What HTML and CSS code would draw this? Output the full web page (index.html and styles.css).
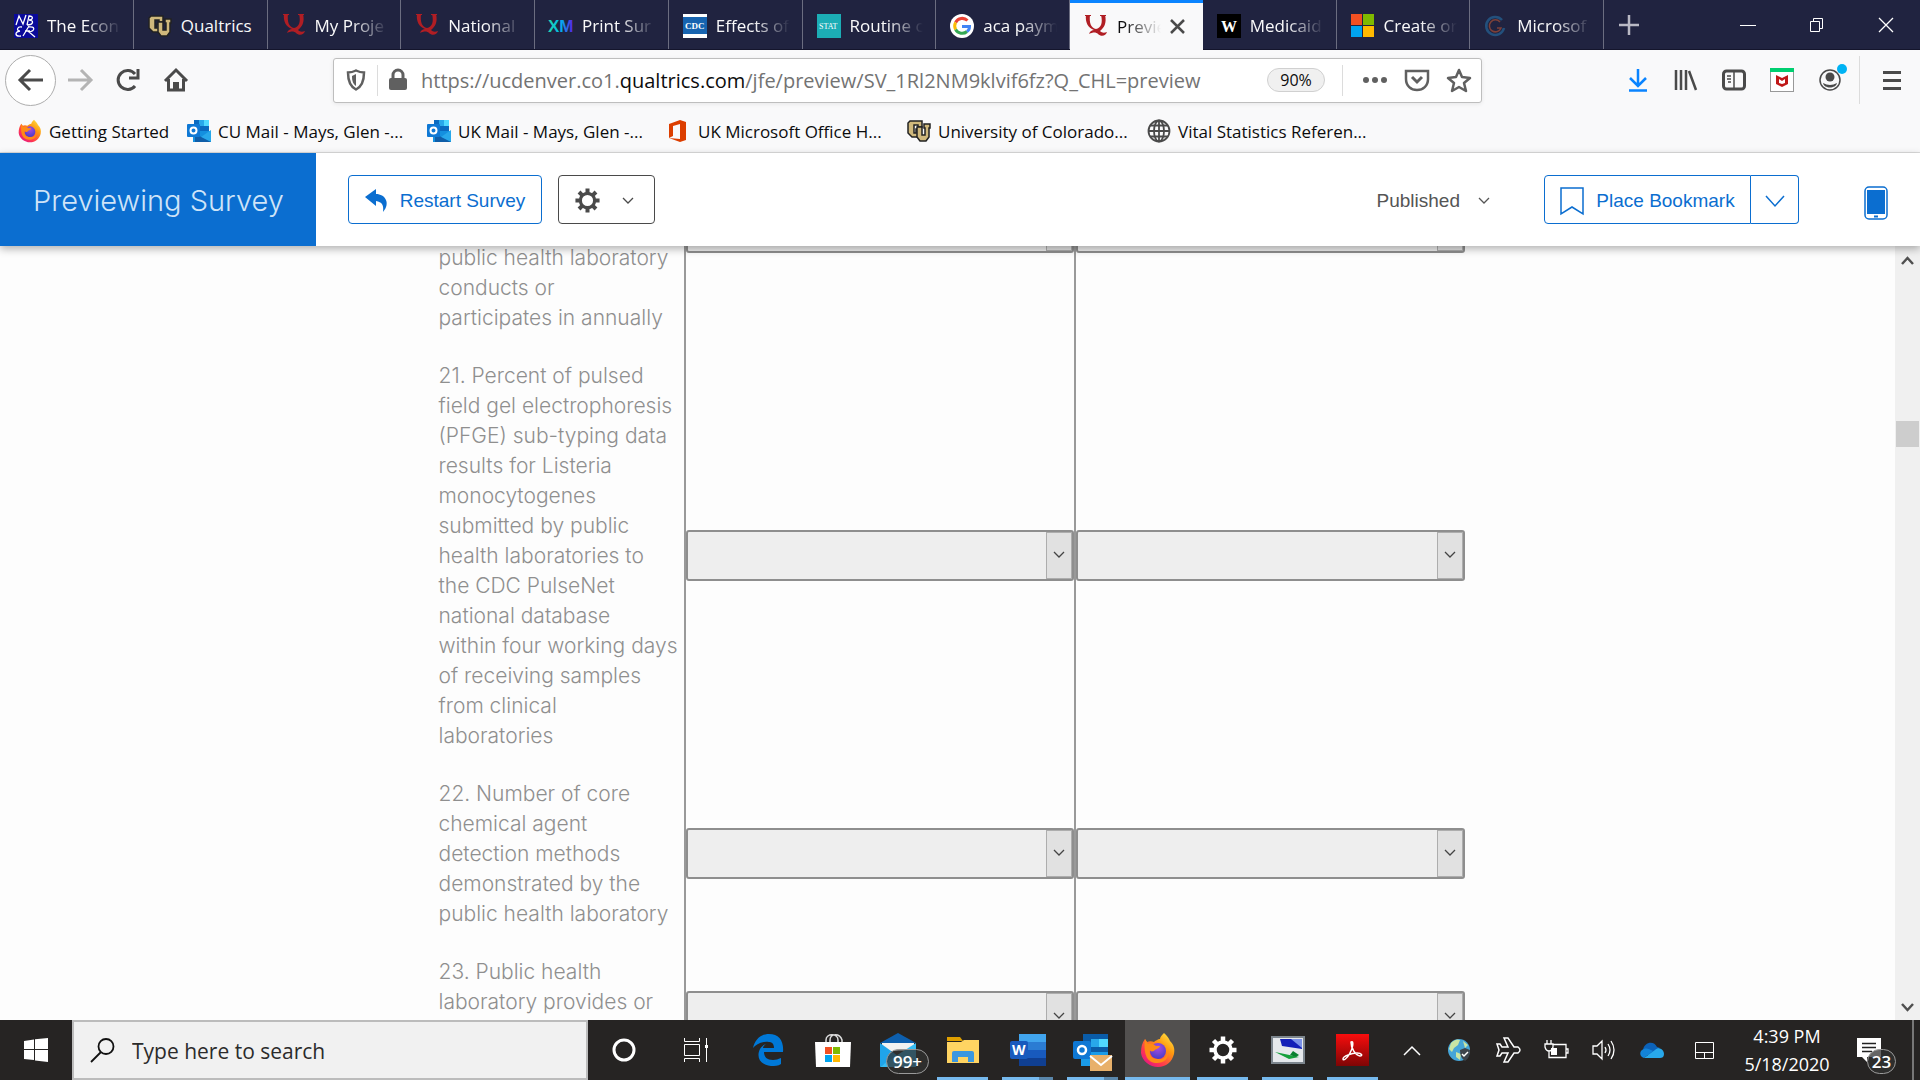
FILE: index.html
```html
<!DOCTYPE html>
<html lang="en">
<head>
    <meta charset="UTF-8">
    <meta name="viewport" content="width=device-width, initial-scale=1.0">
    <title>Preview - Online Survey Software</title>
    <link rel="stylesheet" href="styles.css">
</head>
<body>
    <!-- shared icons -->
    <svg class="defs" width="0" height="0" aria-hidden="true">
        <linearGradient id="fox" x1="1" y1="0" x2="0.2" y2="1">
            <stop offset="0" stop-color="#fff44f"/>
            <stop offset="0.4" stop-color="#ff980e"/>
            <stop offset="0.75" stop-color="#ff3750"/>
            <stop offset="1" stop-color="#e31587"/>
        </linearGradient>
        <linearGradient id="xm" x1="0" y1="0" x2="1" y2="0">
            <stop offset="0" stop-color="#21dbaa"/>
            <stop offset="0.5" stop-color="#00b4ef"/>
            <stop offset="1" stop-color="#5f1ae5"/>
        </linearGradient>
        <linearGradient id="acro" x1="0" y1="0" x2="0" y2="1">
            <stop offset="0" stop-color="#f80d0d"/>
            <stop offset="1" stop-color="#7e0505"/>
        </linearGradient>
        <radialGradient id="orb" cx="0.5" cy="0.3" r="0.7">
            <stop offset="0" stop-color="#a84de0"/>
            <stop offset="1" stop-color="#4a3cc8"/>
        </radialGradient>
        <symbol id="i-q" viewBox="0 0 24 24">
            <path d="M1 .5h6M16 .5h6" stroke="#b01e24"/>
            <path d="M2 0h4c-1 8 1 13 6 14 5-1 7-6 5-14h4c2 8-1 13-5 16 2 2 4 2 7 1-1 4-6 5-9 2-2-2-5-2-9 0 1-3 3-4 5-4C4 13 1 7 2 0z" fill="#b01e24"/>
        </symbol>
        <symbol id="i-cu" viewBox="0 0 24 24">
            <path d="M3 2h12v6h-4V6H7v8h2v-4h4v8H5l-4-4V4z" fill="#cfb87c" stroke="#222" stroke-width="1.5"/>
            <path d="M10 8h5v8h3V9h-1V5h6v4h-1v9l-3 4h-6l-3-4z" fill="#cfb87c" stroke="#222" stroke-width="1.5"/>
        </symbol>
        <symbol id="i-outlook" viewBox="0 0 24 24">
            <path d="M7 1h15v11H7z" fill="#0a6ac0"/>
            <path d="M12 1h5v6h-5z" fill="#28a8ea"/>
            <path d="M17 1h5v6h-5z" fill="#50d9ff"/>
            <path d="M6 12h18v11H6z" fill="#1490df"/>
            <path d="M24 11L14 18l10 5z" fill="#28a8ea"/>
            <path d="M8 12l6 6 10 5H8z" fill="#0f5ea8"/>
            <rect y="5" width="13" height="13" rx="1" fill="#0f78d4"/>
            <circle cx="6.500" cy="11.500" r="3" fill="none" stroke="#fff" stroke-width="2"/>
        </symbol>
        <symbol id="i-fox" viewBox="0 0 36 36">
            <path d="M24 1c3 3 5 5 6 8 4 4 5 8 4 13-2 8-8 13-16 13S2 29 1 21c0-6 1-10 4-14l2 3c2-1 5-1 7 0 1-1 4-3 6-3 0-2 2-4 4-6z" fill="url(#fox)"/>
            <circle cx="18" cy="19" r="8" fill="url(#orb)"/>
            <path d="M5 7l3 5c3-1 6 0 8 2h4c-1 3-5 3-6 5-3 1-4 0-4-1-1 5 2 9 8 9 6 1 9-3 10-8 1 8-4 12-11 12C8 31 3 24 5 7z" fill="#ff8a16"/>
        </symbol>
        <symbol id="i-chev" viewBox="0 0 12 12">
            <path d="M1 3l5 5 5-5" fill="none" stroke="currentColor" stroke-width="1.300"/>
        </symbol>
        <symbol id="i-gear" viewBox="0 0 28 28">
            <circle cx="14" cy="14" r="8" fill="none" stroke="currentColor" stroke-width="3.500"/>
            <path d="M14 .5v5M14 22.500v5M.5 14h5M22.500 14h5M4.500 4.500L8 8M20 20l3.500 3.500M4.500 23.500L8 20M20 8l3.500-3.500" stroke="currentColor" stroke-width="4.500"/>
        </symbol>
        <symbol id="i-ms" viewBox="0 0 24 24">
            <path d="M0 0h11v11H0z" fill="#f25022"/><path d="M12 0h11v11H12z" fill="#7fba00"/>
            <path d="M0 12h11v11H0z" fill="#00a4ef"/><path d="M12 12h11v11H12z" fill="#ffb900"/>
        </symbol>
    </svg>

    <div class="tabbar">
        <div class="tabs">
            <div class="tab"><svg class="fav" viewBox="0 0 24 24"><rect width="24" height="24" fill="#0a0a9a"/><path d="M2 11L5 2l4 8 3-9M13 11l2-9c5 0 4 4 0 4 5 0 5 5-2 5M8 13c-5-1-6 4-2 4-6 1-5 6 1 5M9 22l6-10M14 13c8-1 7 4 1 5l6 5M11 17h5" fill="none" stroke="#fff" stroke-width="1.300"/></svg><span class="tab-title">The Econ</span></div>
            <div class="tab"><svg class="fav"><use href="#i-cu"/></svg><span class="tab-title">Qualtrics</span></div>
            <div class="tab"><svg class="fav"><use href="#i-q"/></svg><span class="tab-title">My Proje</span></div>
            <div class="tab"><svg class="fav"><use href="#i-q"/></svg><span class="tab-title">National</span></div>
            <div class="tab"><svg class="fav" viewBox="0 0 24 24"><text x="-1" y="18" class="xm">XM</text></svg><span class="tab-title">Print Sur</span></div>
            <div class="tab"><svg class="fav" viewBox="0 0 24 24"><rect width="24" height="24" fill="#fff"/><rect y="3" width="24" height="17" fill="#1764b0"/><text x="2" y="15" class="cdc">CDC</text></svg><span class="tab-title">Effects of</span></div>
            <div class="tab"><svg class="fav" viewBox="0 0 24 24"><rect width="24" height="24" fill="#1cadb5"/><text x="2" y="15" class="stat">STAT</text></svg><span class="tab-title">Routine c</span></div>
            <div class="tab"><svg class="fav" viewBox="0 0 24 24"><circle cx="12" cy="12" r="12" fill="#fff"/><g fill="none" stroke-width="3"><path d="M5.600 8.500A7.500 7.500 0 0 1 17.500 6.500" stroke="#ea4335"/><path d="M5.600 15.500a7.500 7.500 0 0 1 0-7" stroke="#fbbc05"/><path d="M17 17.500A7.500 7.500 0 0 1 5.600 15.500" stroke="#34a853"/><path d="M12 12.500h7.500c0 2-1 4-2.500 5" stroke="#4285f4"/></g></svg><span class="tab-title">aca paym</span></div>
            <div class="tab active"><svg class="fav"><use href="#i-q"/></svg><span class="tab-title">Previe</span><button class="tab-close" aria-label="Close tab"><svg width="15" height="15" viewBox="0 0 15 15"><path d="M1 1l13 13M14 1L1 14" stroke="#4a4a4a" stroke-width="2.500"/></svg></button></div>
            <div class="tab"><svg class="fav" viewBox="0 0 24 24"><rect width="24" height="24" fill="#000"/><text x="4" y="18" class="wapo">W</text></svg><span class="tab-title">Medicaid</span></div>
            <div class="tab"><svg class="fav"><use href="#i-ms"/></svg><span class="tab-title">Create or</span></div>
            <div class="tab"><svg class="fav" viewBox="0 0 24 24"><path d="M18 6a9 9 0 1 0 2 8" fill="none" stroke="#23507c" stroke-width="2.500"/><path d="M16 8a6 6 0 1 0 1 6h-4" fill="none" stroke="#7c4038" stroke-width="1.500"/></svg><span class="tab-title">Microsof</span></div>
        </div>
        <button class="newtab" aria-label="New tab"><svg width="22" height="22" viewBox="0 0 22 22"><path d="M11 1v20M1 11h20" stroke="#b9b9c4" stroke-width="2.500"/></svg></button>
        <div class="winctl">
            <button aria-label="Minimize"><svg width="16" height="16"><path d="M0 8.500h16" stroke="#fff"/></svg></button>
            <button aria-label="Restore"><svg width="16" height="16"><path d="M1.500 4.500h9v10h-9zM4.500 4.500v-3h9v10h-3" fill="none" stroke="#fff"/></svg></button>
            <button aria-label="Close"><svg width="16" height="16"><path d="M1 1l14 14M15 1L1 15" stroke="#fff" stroke-width="1.300"/></svg></button>
        </div>
    </div>

    <div class="navbar">
        <button class="back" aria-label="Back"><svg width="26" height="24" viewBox="0 0 26 24"><path d="M25 12H3M12 2L2 12l10 10" fill="none" stroke="#4a4a4a" stroke-width="3"/></svg></button>
        <button class="nav-btn" aria-label="Forward"><svg width="26" height="24" viewBox="0 0 26 24"><path d="M1 12h22M14 2l10 10-10 10" fill="none" stroke="#b4b4b4" stroke-width="3"/></svg></button>
        <button class="nav-btn" aria-label="Reload"><svg width="24" height="24" viewBox="0 0 24 24"><path d="M19 18A9.500 9.500 0 1 1 19 6" fill="none" stroke="#4a4a4a" stroke-width="3"/><path d="M22 1v9h-9" fill="none" stroke="#4a4a4a" stroke-width="3"/></svg></button>
        <button class="nav-btn" aria-label="Home"><svg width="24" height="24" viewBox="0 0 24 24"><path d="M1 13L12 2l11 11M4.500 11v11h15V11" fill="none" stroke="#4a4a4a" stroke-width="3"/><path d="M9 14h6v8H9z" fill="#4a4a4a"/></svg></button>
        <div class="urlbar">
            <svg width="20" height="22" viewBox="0 0 20 22"><path d="M10 1.500c3 1.500 5 2 8 2 0 9-2 14-8 17-6-3-8-8-8-17 3 0 5-.5 8-2z" fill="none" stroke="#606060" stroke-width="2.500"/><path d="M10 5v12c-3-2-4-5-4-10z" fill="#606060"/></svg>
            <span class="url-sep"></span>
            <svg class="lock" width="18" height="22" viewBox="0 0 18 22"><rect y="9" width="18" height="12" rx="2" fill="#606060"/><path d="M4 10V6a5 5 0 0 1 10 0v4" fill="none" stroke="#606060" stroke-width="3"/></svg>
            <span class="url">https://ucdenver.co1.<b>qualtrics.com</b>/jfe/preview/SV_1Rl2NM9klvif6fz?Q_CHL=preview</span>
            <button class="zoom">90%</button>
            <span class="url-sep"></span>
            <button class="url-btn" aria-label="Page actions"><svg width="26" height="24"><g fill="#606060"><circle cx="4" cy="12" r="3"/><circle cx="13" cy="12" r="3"/><circle cx="22" cy="12" r="3"/></g></svg></button>
            <button class="url-btn" aria-label="Save to Pocket"><svg width="26" height="24" viewBox="0 0 26 24"><path d="M2 3h22v8c0 7-5 11-11 11S2 18 2 11z" fill="none" stroke="#606060" stroke-width="2.500"/><path d="M8 9l5 5 5-5" fill="none" stroke="#606060" stroke-width="3"/></svg></button>
            <button class="url-btn" aria-label="Bookmark page"><svg width="26" height="24" viewBox="0 0 26 24"><path d="M13 2l3 7 8 1-6 5 2 8-7-4-7 4 2-8-6-5 8-1z" fill="none" stroke="#606060" stroke-width="2.500" stroke-linejoin="round"/></svg></button>
        </div>
        <div class="toolbar">
            <button class="nav-btn" aria-label="Downloads"><svg width="20" height="24" viewBox="0 0 20 24"><path d="M10 1v16M2 10l8 8 8-8M1 22.500h18" fill="none" stroke="#0a84ff" stroke-width="2.500"/></svg></button>
            <button class="nav-btn" aria-label="Library"><svg width="24" height="24" viewBox="0 0 24 24"><path d="M2 2v20M7 2v20M12 2v20M15 3l7 19" stroke="#4a4a4a" stroke-width="2.500"/></svg></button>
            <button class="nav-btn" aria-label="Sidebars"><svg width="24" height="24" viewBox="0 0 24 24"><rect x="1.500" y="3" width="21" height="18" rx="3" fill="none" stroke="#4a4a4a" stroke-width="3"/><path d="M12 3v18M5 8h4M5 11h4M6 14h3" stroke="#4a4a4a" stroke-width="1.500"/></svg></button>
            <button class="nav-btn" aria-label="McAfee"><svg width="24" height="24" viewBox="0 0 24 24"><rect x=".5" y=".5" width="23" height="23" fill="#fff" stroke="#999"/><path d="M0 0h24v4H0z" fill="#00cf70"/><path d="M6 7l6 3 6-3v9l-6 3-6-3z" fill="#c01818"/><path d="M9 11l3 2 3-2v4l-3 1-3-1z" fill="#fff"/></svg></button>
            <button class="nav-btn account" aria-label="Account"><svg width="24" height="24" viewBox="0 0 24 24"><circle cx="12" cy="12" r="10" fill="none" stroke="#4a4a4a" stroke-width="1.500"/><circle cx="12" cy="9" r="4.500" fill="#4a4a4a"/><path d="M5 15q7 4 14 0c-1 6-13 6-14 0z" fill="#4a4a4a"/></svg><span class="dot"></span></button>
        </div>
        <button class="menu" aria-label="Menu"><svg width="20" height="20"><path d="M1 2.500h18M1 10.500h18M1 18.500h18" stroke="#4a4a4a" stroke-width="3"/></svg></button>
    </div>

    <div class="bookmarks">
        <a class="bm first" href="#"><svg class="fav"><use href="#i-fox"/></svg>Getting Started</a>
        <a class="bm" href="#"><svg class="fav"><use href="#i-outlook"/></svg>CU Mail - Mays, Glen -...</a>
        <a class="bm" href="#"><svg class="fav"><use href="#i-outlook"/></svg>UK Mail - Mays, Glen -...</a>
        <a class="bm" href="#"><svg class="fav" viewBox="0 0 24 24"><path d="M2 5l11-4 6 2v18l-6 2-11-4 11 1V5L6 7v10l-4 2z" fill="#dc3e00"/></svg>UK Microsoft Office H...</a>
        <a class="bm" href="#"><svg class="fav"><use href="#i-cu"/></svg>University of Colorado...</a>
        <a class="bm" href="#"><svg class="fav" viewBox="0 0 24 24"><g fill="none" stroke="#4a4a4a" stroke-width="1.800"><circle cx="12" cy="12" r="10.500"/><ellipse cx="12" cy="12" rx="5" ry="10.500"/><path d="M12 1v22M1 12h22M3 6.500h18M3 17.500h18"/></g></svg>Vital Statistics Referen...</a>
    </div>

    <header class="preview">
        <h1 class="preview-title">Previewing Survey</h1>
        <button class="btn blue restart"><svg width="24" height="24" viewBox="0 0 24 24"><path d="M0 8L11 0v5c9 0 15 9 7 18 1-7-1-10-7-11v5z" fill="#0b6ed0"/></svg>Restart Survey</button>
        <button class="btn tools" aria-label="Tools"><svg width="25" height="25"><use href="#i-gear"/></svg><svg width="12" height="12"><use href="#i-chev"/></svg></button>
        <button class="version">Published<svg width="12" height="12"><use href="#i-chev"/></svg></button>
        <div class="split">
            <button class="btn blue place"><svg width="24" height="28" viewBox="0 0 24 28"><path d="M1 1h22v26l-11-7-11 7z" fill="none" stroke="#0b6ed0" stroke-width="1.500"/></svg>Place Bookmark</button>
            <button class="btn blue more" aria-label="More"><svg width="20" height="12" viewBox="0 0 20 12"><path d="M1 1l9 10 9-10" fill="none" stroke="#0b6ed0" stroke-width="1.500"/></svg></button>
        </div>
        <button class="device" aria-label="Mobile view"><svg width="24" height="34" viewBox="0 0 24 34"><rect x="1" y="1" width="22" height="32" rx="4" fill="#fff" stroke="#0b6ed0" stroke-width="1.500"/><path d="M3 4h18v24H3z" fill="#0b6ed0"/><path d="M10 30.500h4" stroke="#0b6ed0" stroke-width="2"/></svg></button>
    </header>

    <main class="page">
        <div class="survey">
            <table class="matrix">
                <tbody>
                    <tr class="q20">
                        <th scope="row">public health laboratory<br>conducts or<br>participates in annually</th>
                        <td><div class="pick"><select aria-label="Question 20, first column"><option></option></select><span class="arrow"><svg width="12" height="12"><use href="#i-chev"/></svg></span></div></td>
                        <td><div class="pick"><select aria-label="Question 20, second column"><option></option></select><span class="arrow"><svg width="12" height="12"><use href="#i-chev"/></svg></span></div></td>
                    </tr>
                    <tr>
                        <th scope="row">21. Percent of pulsed<br>field gel electrophoresis<br>(PFGE) sub-typing data<br>results for Listeria<br>monocytogenes<br>submitted by public<br>health laboratories to<br>the CDC PulseNet<br>national database<br>within four working days<br>of receiving samples<br>from clinical<br>laboratories</th>
                        <td><div class="pick"><select aria-label="Question 21, first column"><option></option></select><span class="arrow"><svg width="12" height="12"><use href="#i-chev"/></svg></span></div></td>
                        <td><div class="pick"><select aria-label="Question 21, second column"><option></option></select><span class="arrow"><svg width="12" height="12"><use href="#i-chev"/></svg></span></div></td>
                    </tr>
                    <tr>
                        <th scope="row">22. Number of core<br>chemical agent<br>detection methods<br>demonstrated by the<br>public health laboratory</th>
                        <td><div class="pick"><select aria-label="Question 22, first column"><option></option></select><span class="arrow"><svg width="12" height="12"><use href="#i-chev"/></svg></span></div></td>
                        <td><div class="pick"><select aria-label="Question 22, second column"><option></option></select><span class="arrow"><svg width="12" height="12"><use href="#i-chev"/></svg></span></div></td>
                    </tr>
                    <tr class="q23">
                        <th scope="row">23. Public health<br>laboratory provides or</th>
                        <td><div class="pick"><select aria-label="Question 23, first column"><option></option></select><span class="arrow"><svg width="12" height="12"><use href="#i-chev"/></svg></span></div></td>
                        <td><div class="pick"><select aria-label="Question 23, second column"><option></option></select><span class="arrow"><svg width="12" height="12"><use href="#i-chev"/></svg></span></div></td>
                    </tr>
                </tbody>
            </table>
        </div>
        <div class="scrollbar">
            <svg width="13" height="9" viewBox="0 0 13 9"><path d="M1 8l5.500-6L12 8" fill="none" stroke="#505050" stroke-width="2.500"/></svg>
            <span class="thumb"></span>
            <svg width="13" height="9" viewBox="0 0 13 9"><path d="M1 1l5.500 6L12 1" fill="none" stroke="#505050" stroke-width="2.500"/></svg>
        </div>
    </main>

    <footer class="taskbar">
        <button class="start" aria-label="Start"><svg width="24" height="24" viewBox="0 0 24 24"><path d="M0 3l10-1.500V11H0zM11 1.300L24 0v11H11zM0 12h10v10L0 21zM11 12h13v12l-13-1.500z" fill="#fff"/></svg></button>
        <label class="search">
            <svg width="25" height="25" viewBox="0 0 25 25"><circle cx="16" cy="8.500" r="7.500" fill="none" stroke="#111" stroke-width="1.800"/><path d="M11 14L1 24" stroke="#111" stroke-width="1.800"/></svg>
            <input type="text" placeholder="Type here to search" aria-label="Search">
        </label>
        <button class="sys" aria-label="Cortana"><svg width="24" height="24"><circle cx="12" cy="12" r="10" fill="none" stroke="#fff" stroke-width="3"/></svg></button>
        <button class="sys" aria-label="Task View"><svg width="24" height="24" viewBox="0 0 24 24"><path d="M.5 6.500h15v11H.5zM.5 0v3.500h15V0M.5 24v-3.500h15V24M22.500 0v24" fill="none" stroke="#fff"/><path d="M21 7h3v3h-3z" fill="#fff"/></svg></button>
        <div class="apps">
            <button class="app" aria-label="Edge"><svg width="32" height="32" viewBox="0 0 32 32"><path d="M1 14C3 5 9 0 17 0c10 0 15 7 14 18H12c0 5 3 8 9 8 3 0 5-1 8-2v6c-3 2-6 2-10 2C8 31 4 23 8 15c1-2 3-4 6-5-2 1-3 3-3 4h11c0-4-2-6-5-6C10 7 4 10 1 14z" fill="#0078d7"/></svg></button>
            <button class="app" aria-label="Store"><svg width="36" height="34" viewBox="0 0 36 34"><path d="M11 10V7c0-7 12-7 12 0v3M15 10V7c0-7 10-7 12 0v3" fill="none" stroke="#ddd" stroke-width="1.500"/><path d="M0 9h36l-1 25H1z" fill="#fff"/><path d="M10 14h7v7h-7z" fill="#f25022"/><path d="M18 14h7v7h-7z" fill="#7fba00"/><path d="M10 22h7v7h-7z" fill="#00a4ef"/><path d="M18 22h7v7h-7z" fill="#ffb900"/></svg></button>
            <button class="app" aria-label="Mail"><svg width="36" height="34" viewBox="0 0 36 34"><path d="M0 10L18 0l18 10z" fill="#0d5fae"/><path d="M2 10h32v8H2z" fill="#f2f2f2"/><path d="M0 10l18 13L0 34z" fill="#1fa4ea"/><path d="M36 10L8 28l-8 6h36z" fill="#35bdf5"/></svg><span class="count mail-count">99+</span></button>
            <button class="app open" aria-label="File Explorer"><svg width="32" height="26" viewBox="0 0 32 26"><path d="M0 0h13l3 4H0z" fill="#e0a000"/><path d="M0 5h14l3-2h15v23H0z" fill="#ffd462"/><path d="M5 25V16q0-2 2-2h18q2 0 2 2v9h-6v-5H11v5z" fill="#3a97e0"/></svg></button>
            <button class="app open multi" aria-label="Word"><svg width="36" height="32" viewBox="0 0 36 32"><path d="M9 0h27v8H9z" fill="#41a5ee"/><path d="M9 8h27v8H9z" fill="#2b7cd3"/><path d="M9 16h27v8H9z" fill="#185abd"/><path d="M9 24h27v8H9z" fill="#103f91"/><rect y="7" width="18" height="18" rx="2" fill="#185abd"/><text x="2" y="21" class="w">W</text></svg></button>
            <button class="app open multi" aria-label="Outlook"><svg class="mailed" width="40" height="38" viewBox="0 0 40 38"><path d="M10 0h25v20H10z" fill="#0a5ca8"/><path d="M18 5h8v8h-8z" fill="#28a8ea"/><path d="M26 5h9v8h-9z" fill="#50d9ff"/><path d="M8 18h27v14H8z" fill="#1a9be8"/><rect y="7" width="18" height="18" rx="2" fill="#0f78d4"/><circle cx="9" cy="16" r="4" fill="none" stroke="#fff" stroke-width="2.500"/><path d="M17 21h22v16H17z" fill="#e8b06a"/><path d="M17 22l11 9 11-9" fill="none" stroke="#fff" stroke-width="2"/></svg></button>
            <button class="app open current" aria-label="Firefox"><svg width="36" height="36"><use href="#i-fox"/></svg></button>
            <button class="app open" aria-label="Settings"><svg class="white" width="28" height="28"><use href="#i-gear"/></svg></button>
            <button class="app open" aria-label="Snipping Tool"><svg width="34" height="28" viewBox="0 0 34 28"><path d="M1 1h32v26H1z" fill="#e6e9ec" stroke="#7d868e" stroke-width="2"/><path d="M9 3h22v10L11 10z" fill="#1420b8"/><path d="M20 3h11v9z" fill="#7b92e8"/><path d="M4 16l24 5-10 2z" fill="#15a03c"/><path d="M22 15l6 4-3 2-6-2z" fill="#0a8030"/></svg></button>
            <button class="app open" aria-label="Acrobat"><svg width="33" height="32" viewBox="0 0 33 32"><path d="M0 0h33v32H0z" fill="url(#acro)"/><path d="M15 8c3-2 2 6-1 11-3 6-7 8-7 6 0-3 9-6 14-6s6 3 3 3c-5-1-9-8-9-14z" fill="none" stroke="#fff" stroke-width="1.500"/></svg></button>
        </div>
        <div class="tray">
            <button class="tray-btn" aria-label="Show hidden icons"><svg width="18" height="11"><path d="M1 10l8-8 8 8" fill="none" stroke="#fff" stroke-width="1.500"/></svg></button>
            <button class="tray-btn" aria-label="Network"><svg width="24" height="24" viewBox="0 0 24 24"><circle cx="11" cy="12" r="11" fill="#45a5d8"/><path d="M3 5q5-5 9-3l-2 5-4 3-2 4-3-3zM8 14l5 2-1 6-4-3zM15 3l5 4-3 3z" fill="#c9e5a4"/><path d="M12 12l5-2 5 2q0 8-5 11-5-3-5-11z" fill="#3d434a"/><path d="M14 16l2 2 4-4" fill="none" stroke="#fff" stroke-width="1.500"/></svg></button>
            <button class="tray-btn" aria-label="Airplane mode"><svg width="25" height="26" viewBox="0 0 25 26"><path d="M1 7h3l2 3h6L8 1h4l6 9h4q4 3 0 6h-4l-6 9H8l4-9H6l-2 3H1l2-6z" fill="none" stroke="#fff" stroke-width="1.500"/></svg></button>
            <button class="tray-btn" aria-label="Battery"><svg width="25" height="20" viewBox="0 0 25 20"><path d="M9 4.500h13v13H5V14M22 9h2v4h-2M3 0v4M7 0v4M1 4h8v3q-1 4-4 4T1 7zM5 11v5" fill="none" stroke="#fff" stroke-width="1.300"/><path d="M7 8h6v7H7z" fill="#fff"/></svg></button>
            <button class="tray-btn" aria-label="Volume"><svg width="24" height="20" viewBox="0 0 24 20"><path d="M1 6h4l5-5v18l-5-5H1zM13 7q2 3 0 6M16 4q4 6 0 12M19 1q6 9 0 18" fill="none" stroke="#fff" stroke-width="1.300"/></svg></button>
            <button class="tray-btn" aria-label="OneDrive"><svg width="24" height="16" viewBox="0 0 24 16"><path d="M3 8C4 0 14-2 17 5l3 1-8 7H3z" fill="#0c62b8"/><path d="M4 16c-5-1-5-8 0-9 3-1 5 0 9 2z" fill="#1283d8"/><path d="M4 16l11-8c4-4 9 0 9 4 0 3-2 4-4 4z" fill="#28a8ea"/></svg></button>
            <button class="tray-btn touch" aria-label="Touchpad"><svg width="20" height="17"><path d="M.5.5h18v16H.5zM.5 10.500h18M9.500 10.500v6" fill="none" stroke="#fff"/></svg></button>
            <div class="clock"><span>4:39 PM</span><span>5/18/2020</span></div>
            <button class="notif" aria-label="Notifications"><svg width="24" height="24" viewBox="0 0 24 24"><path d="M0 0h24v19H10v5l-5-5H0z" fill="#fff"/><path d="M5 5.500h14M5 9.500h14M5 13.500h10" stroke="#222" stroke-width="1.300"/></svg><span class="count note-count">23</span></button>
            <span class="peek"></span>
        </div>
    </footer>
</body>
</html>
```

FILE: styles.css
```css
* {
    box-sizing: border-box;
}
body {
    margin: 0;
    height: 100vh;
    display: flex;
    flex-direction: column;
    overflow: hidden;
    font-family: "Open Sans", "Noto Sans", sans-serif;
    font-size: 17px;
    color: #0c0c0d;
    background-color: #fff;
}
button {
    display: flex;
    align-items: center;
    justify-content: center;
    padding: 0;
    border: none;
    background: none;
    font: inherit;
    color: inherit;
}
svg {
    flex: none;
    overflow: visible;
}
.defs {
    position: absolute;
}

/* tab strip */
.tabbar {
    display: flex;
    flex: none;
    height: 50px;
    background-color: #202340;
    border-bottom: 1px solid #14152c;
    color: #f9f9fa;
}
.tabs {
    display: flex;
    flex: 0 1 1604px;
    min-width: 0;
}
.tab {
    flex: 1 1 0;
    min-width: 0;
    display: flex;
    align-items: center;
    gap: 9px;
    padding: 2px 12px 0 14px;
    border-right: 1px solid #6b6d80;
}
.fav {
    width: 24px;
    height: 24px;
}
.tab-title {
    flex: 1;
    min-width: 0;
    overflow: hidden;
    white-space: nowrap;
    mask-image: linear-gradient(to left, transparent, #000 36px);
}
.tab:nth-child(2) .tab-title {
    mask-image: none;
}
.tab.active {
    height: 50px;
    padding-top: 0;
    background-color: #f9f9fa;
    border-top: 3px solid #0a84ff;
    border-right: none;
    color: #0c0c0d;
}
.tab-close {
    padding-right: 6px;
}
.xm {
    font: bold 17px "Liberation Sans", sans-serif;
    fill: url(#xm);
}
.cdc {
    font: bold 9px "Liberation Serif", serif;
    fill: #fff;
}
.stat {
    font: 8px "Liberation Serif", serif;
    fill: #fff;
}
.wapo {
    font: bold 16px "Liberation Serif", serif;
    fill: #fff;
}
.newtab {
    width: 50px;
}
.winctl {
    display: flex;
    margin-left: auto;
}
.winctl button {
    width: 69px;
}

/* navigation bar */
.navbar {
    flex: none;
    display: flex;
    align-items: center;
    height: 60px;
    padding-left: 5px;
    background-color: #f9f9fa;
}
.back {
    width: 51px;
    height: 51px;
    background-color: #fff;
    border: 1px solid #adadad;
    border-radius: 50%;
}
.nav-btn {
    position: relative;
    width: 48px;
    height: 48px;
}
.urlbar {
    flex: 1;
    display: flex;
    align-items: center;
    height: 45px;
    margin: 0 132px 0 133px;
    padding: 0 1px 0 12px;
    background-color: #fff;
    border: 1px solid #bebebe;
    border-radius: 3px;
    box-shadow: 0 1px 4px rgba(0, 0, 0, 0.08);
}
.url-sep {
    width: 1px;
    height: 31px;
    margin: 0 11px;
    background-color: #dcdcdc;
}
.url {
    flex: 1;
    padding-left: 14px;
    font-size: 20px;
    color: #737373;
    white-space: nowrap;
}
.url b {
    font-weight: normal;
    color: #0c0c0d;
}
.zoom {
    width: 58px;
    height: 24px;
    margin-right: 6px;
    border: 1px solid #d0d0d0;
    border-radius: 12px;
    background-color: #f0f0f0;
    font-size: 16px;
}
.url-btn {
    width: 42px;
}
.toolbar {
    display: flex;
    padding-right: 5px;
    border-right: 1px solid #dcdcdc;
}
.dot {
    position: absolute;
    top: 8px;
    right: 7px;
    width: 10px;
    height: 10px;
    border-radius: 50%;
    background-color: #00b3f4;
}
.menu {
    width: 60px;
    padding-left: 4px;
}

/* bookmarks */
.bookmarks {
    flex: none;
    display: flex;
    height: 43px;
    padding-left: 18px;
    background-color: #f9f9fa;
    border-bottom: 1px solid #dcdcdc;
}
.bm {
    display: flex;
    align-items: center;
    gap: 7px;
    width: 240px;
    color: #0c0c0d;
    text-decoration: none;
    white-space: nowrap;
}
.bm.first {
    width: 169px;
}

/* survey preview header */
.preview {
    position: relative;
    z-index: 1;
    flex: none;
    display: flex;
    align-items: center;
    height: 93px;
    padding-right: 32px;
    background-color: #fff;
    box-shadow: 0 3px 8px rgba(0, 0, 0, 0.3);
    font-family: "Liberation Sans", Arial, sans-serif;
    font-size: 19px;
}
.preview-title {
    display: flex;
    align-items: center;
    align-self: stretch;
    width: 316px;
    margin: 0 32px 0 0;
    padding: 2px 0 0 33px;
    background-color: #0b6ed0;
    color: #cfe4f8;
    font-family: Inter, sans-serif;
    font-size: 29px;
    font-weight: 300;
}
.btn {
    height: 49px;
    padding-top: 2px;
    border: 1px solid #4a4a4a;
    border-radius: 4px;
    background-color: #fff;
    color: #4a4a4a;
}
.btn.blue {
    border-color: #0b6ed0;
    color: #0b6ed0;
}
.restart {
    width: 194px;
    gap: 11px;
    margin-right: 16px;
}
.tools {
    width: 97px;
    gap: 22px;
    padding-right: 4px;
}
.version {
    gap: 18px;
    margin-left: auto;
    margin-right: 54px;
    padding-top: 2px;
    color: #555;
}
.split {
    display: flex;
    margin-right: 65px;
}
.place {
    width: 207px;
    gap: 12px;
    border-radius: 4px 0 0 4px;
}
.more {
    width: 48px;
    border-left: none;
    border-radius: 0 4px 4px 0;
}
.device {
    padding-top: 7px;
}

/* survey body */
.page {
    flex: 1;
    min-height: 0;
    display: flex;
    background-color: #fdfdfd;
}
.survey {
    flex: 1;
    padding-right: 12px;
    overflow: hidden;
}
.matrix {
    width: 1046px;
    /* scrolled part way down question 20 */
    margin: -138px auto 0;
    border-collapse: collapse;
    table-layout: fixed;
}
.matrix th {
    width: 266px;
    padding: 15px 0 13px 20px;
    font-family: Inter, "Open Sans", sans-serif;
    font-size: 21px;
    font-weight: 300;
    line-height: 30px;
    text-align: left;
    white-space: nowrap;
    color: #8f8f8f;
}
.matrix td {
    padding: 0;
    border-left: 2px solid #999;
}
.q20 {
    height: 238px;
}
.q20 th {
    vertical-align: bottom;
}
.q23 {
    height: 148px;
}
.q23 th {
    vertical-align: top;
}
.pick {
    position: relative;
}
.pick select {
    display: block;
    width: 100%;
    height: 51px;
    appearance: none;
    border: 2px solid #8e8e8e;
    border-radius: 3px;
    background-color: #eee;
}
.arrow {
    position: absolute;
    top: 2px;
    right: 2px;
    bottom: 2px;
    width: 26px;
    display: flex;
    align-items: center;
    justify-content: center;
    border: 1px solid #adadad;
    background-color: #e1e1e1;
    color: #444;
    pointer-events: none;
}
.scrollbar {
    display: flex;
    flex-direction: column;
    align-items: center;
    justify-content: space-between;
    width: 25px;
    padding: 10px 0 8px;
    background-color: #f0f0f0;
}
.thumb {
    width: 23px;
    height: 26px;
    margin: 156px 0 auto;
    background-color: #cdcdcd;
}

/* taskbar */
.taskbar {
    flex: none;
    display: flex;
    height: 60px;
    background-color: #262423;
    color: #fff;
}
.start {
    width: 72px;
}
.search {
    flex: 0 1 516px;
    display: flex;
    align-items: center;
    gap: 17px;
    padding-left: 16px;
    border: 2px solid #bcbcbc;
    background-color: #f1f1f1;
}
.search input {
    flex: 1;
    min-width: 0;
    padding: 2px 0 0;
    border: none;
    outline: none;
    background: none;
    font: 21px "Open Sans", "Noto Sans", sans-serif;
}
.search input::placeholder {
    color: #2b2b2b;
}
.sys {
    width: 72px;
}
.apps {
    display: flex;
    margin-left: 3px;
}
.app {
    position: relative;
    width: 65px;
}
.app.open::after {
    content: "";
    position: absolute;
    left: 7px;
    right: 7px;
    bottom: 0;
    height: 3px;
    background-color: #76b9ed;
}
.app.multi::after {
    background: linear-gradient(to left, #5a86aa 14px, #76b9ed 14px);
}
.app.current {
    background-color: #52504f;
}
.app.current::after {
    left: 0;
    right: 0;
}
.mailed {
    margin-top: 6px;
}
.white {
    color: #fff;
}
.w {
    font: bold 14px "Open Sans", sans-serif;
    fill: #fff;
}
.count {
    position: absolute;
    display: flex;
    align-items: center;
    justify-content: center;
    height: 25px;
    border: 1px solid #9a9a9a;
    border-radius: 13px;
    background-color: rgba(50, 50, 50, 0.75);
    font-size: 17px;
    font-weight: 600;
}
.mail-count {
    right: 1px;
    bottom: 6px;
    width: 43px;
}
.note-count {
    right: 1px;
    bottom: 6px;
    width: 29px;
}
.tray {
    display: flex;
    margin-left: auto;
}
.tray-btn {
    width: 48px;
}
.touch {
    width: 58px;
}
.clock {
    width: 106px;
    display: flex;
    flex-direction: column;
    justify-content: center;
    align-items: center;
    font-size: 18px;
    line-height: 28px;
}
.notif {
    position: relative;
    width: 57px;
}
.peek {
    width: 2px;
    margin: 0 6px 0 15px;
    background-color: #777;
}
```
